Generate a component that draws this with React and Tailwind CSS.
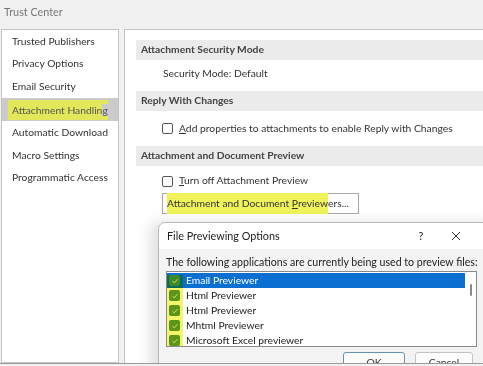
import React from 'react';

const navItems = [
  'Trusted Publishers',
  'Privacy Options',
  'Email Security',
  'Attachment Handling',
  'Automatic Download',
  'Macro Settings',
  'Programmatic Access',
];

const previewers = [
  'Email Previewer',
  'Html Previewer',
  'Html Previewer',
  'Mhtml Previewer',
  'Microsoft Excel previewer',
];

const Checkbox = () => (
  <span className="w-[11px] h-[11px] border border-[#555] rounded-[2px] bg-white shrink-0" />
);

const GreenCheck = ({ selected }) => (
  <span
    className={`w-[11px] h-[11px] rounded-[2px] shrink-0 flex items-center justify-center ${
      selected ? 'bg-[#3f8f6a]' : 'bg-[#5f9b3e]'
    }`}
  >
    <svg width="8" height="8" viewBox="0 0 8 8">
      <path d="M1.5 4.2 L3.2 5.8 L6.5 2.2" stroke="#dfeecf" strokeWidth="1" fill="none" />
    </svg>
  </span>
);

const SectionHeader = ({ children }) => (
  <div className="h-[20px] bg-[#ebebeb] flex items-center pl-[5px] font-bold text-[#444]">{children}</div>
);

export default function App() {
  return (
    <div
      className="w-[483px] h-[366px] relative overflow-hidden bg-[#f1f1f1] text-[10.3px] text-[#333] whitespace-nowrap"
      style={{ fontFamily: 'Lato, sans-serif' }}
    >
      {/* title */}
      <div className="h-[29px] pl-[4px] pt-[4px] text-[#777] text-[10.8px]">Trust Center</div>

      <div className="flex h-[334px]">
        {/* left nav */}
        <div className="w-[118px] ml-[1px] bg-white border border-[#c4c4c4]">
          {navItems.map((item) => {
            const sel = item === 'Attachment Handling';
            return (
              <div
                key={item}
                className={`h-[22.8px] flex items-center pl-[10px] ${sel ? 'bg-[#cbcbcb]' : ''}`}
              >
                {sel ? (
                  <span className="bg-[#e2e85a] text-[#555] -ml-[4px] pl-[4px] pt-[3px] pb-[2px]">
                    Attachment Handlin<span className="bg-[#cbcbcb]">g</span>
                  </span>
                ) : (
                  item
                )}
              </div>
            );
          })}
        </div>

        {/* right content */}
        <div className="flex-1 ml-[5px] bg-white border-l border-t border-[#c4c4c4] pl-[11px] pt-[10px]">
          <SectionHeader>Attachment Security Mode</SectionHeader>
          <div className="h-[31px] flex items-center pl-[27px] pb-[3px]">Security Mode: Default</div>
          <SectionHeader>Reply With Changes</SectionHeader>
          <div className="h-[35px] flex items-center gap-[6px] pl-[26px]">
            <Checkbox />
            <span>
              <span className="underline">A</span>dd properties to attachments to enable Reply with Changes
            </span>
          </div>
          <SectionHeader>Attachment and Document Preview</SectionHeader>
          <div className="h-[27px] flex items-center gap-[6px] pl-[26px] pt-[3px]">
            <Checkbox />
            <span>
              <span className="underline">T</span>urn off Attachment Preview
            </span>
          </div>
          <div className="pl-[26px]">
            <div className="w-[197px] h-[21px] border border-[#a9a9a9] bg-white flex items-center pl-[4px]">
              <span className="bg-[#f0f45a] pt-[3px] pb-[2px]">
                Attachment and Document <span className="underline">P</span>review
              </span>
              <span>ers...</span>
            </div>
          </div>
        </div>
      </div>

      {/* dialog */}
      <div className="absolute left-[158px] top-[222px] w-[340px] h-[160px] bg-[#f3f3f3] border border-[#b9b9b9] rounded-tl-[7px] shadow-[-8px_0_14px_rgba(0,0,0,0.12)]">
        <div className="h-[26px] bg-white rounded-tl-[7px] flex items-center pl-[8px] text-[#222] text-[10.8px]">
          <span className="flex-1">File Previewing Options</span>
          <span className="w-[12px] mr-[24px] text-center">?</span>
          <svg width="10" height="10" viewBox="0 0 10 10" className="mr-[36px]">
            <path d="M1 1 L9 9 M9 1 L1 9" stroke="#333" strokeWidth="1" />
          </svg>
        </div>
        <div className="pl-[7px] pt-[6px]">
          <div className="h-[16px] flex items-center text-[#222] text-[10.6px]">
            The following applications are currently being used to preview files:
          </div>
          <div className="relative w-[311px] h-[76px] border border-[#8a8a8a] bg-white flex">
            <div className="flex-1 pt-[1px]">
              {previewers.map((p, i) => (
                <div
                  key={i}
                  className={`h-[15px] flex items-center gap-[6px] pl-[2px] ${
                    i === 0 ? 'bg-[#0a6fd0] text-white' : 'text-[#222]'
                  }`}
                >
                  <GreenCheck selected={i === 0} />
                  <span>{p}</span>
                </div>
              ))}
            </div>
            <div className="w-[11px] flex justify-center pt-[12px]">
              <span className="w-[2px] h-[12px] bg-[#8a8a8a] rounded" />
            </div>
            <span className="absolute left-0 top-[3px] w-[16px] h-[71px] bg-[#f5f56a] mix-blend-multiply" />
          </div>
          <div className="flex justify-end gap-[10px] pr-[24px] pt-[5px]">
            <div className="w-[62px] h-[22px] border border-[#6a8fb4] rounded-[3px] bg-[#fdfdfd] flex justify-center pt-[4px] leading-none">OK</div>
            <div className="w-[58px] h-[22px] border border-[#c4c4c4] rounded-[3px] bg-[#fdfdfd] flex justify-center pt-[4px] leading-none">Cancel</div>
          </div>
        </div>
      </div>

      {/* bottom edge */}
      <div className="absolute left-0 right-0 bottom-0 h-[3px] bg-[#f1f1f1] border-t border-[#9a9a9a]" />
    </div>
  );
}
